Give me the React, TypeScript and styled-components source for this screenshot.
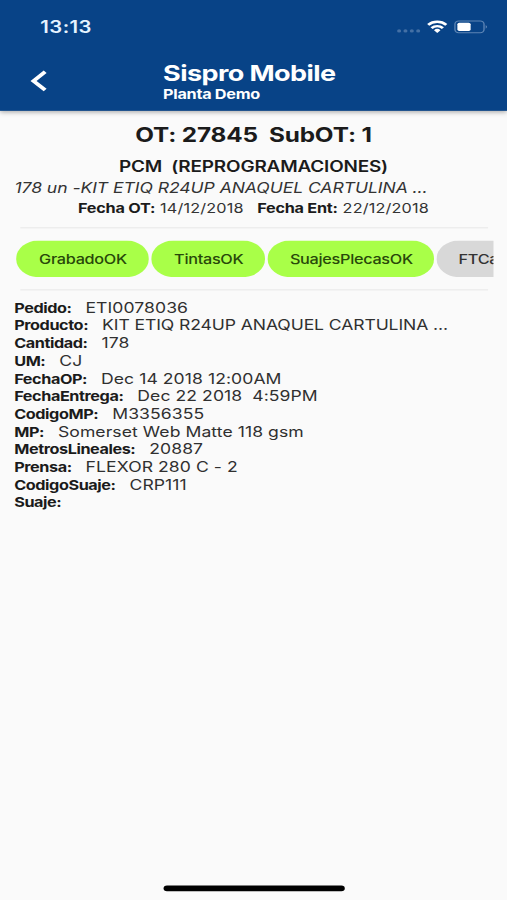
import React from "react";
import styled, { createGlobalStyle } from "styled-components";

const GlobalStyle = createGlobalStyle`
  body {
    margin: 0;
    background: #fafafa;
    font-family: Inter, "Liberation Sans", sans-serif;
    color: #1b1b1b;
    overflow: hidden;
  }
`;

const Viewport = styled.div`
  width: 507px;
  height: 900px;
  overflow: hidden;
`;

/* Laid out on a 375 x 812 phone canvas and stretched to fill the viewport. */
const Screen = styled.main`
  display: flex;
  flex-direction: column;
  width: 375px;
  height: 812px;
  background: #fafafa;
  transform: scale(1.352, 1.1084);
  transform-origin: 0 0;
`;

const Header = styled.header`
  flex: none;
  height: 100.4px;
  background: #084387;
  color: #fff;
  box-shadow: 0 1px 4px rgba(0, 0, 0, 0.35);
`;

const StatusBar = styled.div`
  display: flex;
  align-items: center;
  justify-content: space-between;
  height: 44px;
  padding: 5px 14px 0 29.8px;
  box-sizing: border-box;
`;

const Clock = styled.span`
  font-size: 15px;
  font-weight: 600;
  letter-spacing: 0.33px;
  line-height: 18px;
  color: #e6f3ff;
`;

const StatusIcons = styled.div`
  display: flex;
  align-items: center;
`;

const AppBar = styled.div`
  display: flex;
  align-items: center;
  height: 56px;
`;

const BackButton = styled.button`
  display: flex;
  width: 120.6px;
  padding: 1px 0 0 22px;
  border: 0;
  background: none;
  color: inherit;
`;

const Titles = styled.div`
  display: flex;
  flex-direction: column;
  padding-top: 2.4px;
`;

const Title = styled.h1`
  margin: 0;
  font-size: 20px;
  font-weight: 700;
  line-height: 23px;
  letter-spacing: -0.44px;
`;

const Subtitle = styled.span`
  font-size: 12px;
  font-weight: 700;
  line-height: 14px;
  letter-spacing: -0.2px;
`;

const Content = styled.section`
  display: flex;
  flex-direction: column;
  padding: 10.6px 10px 0;
`;

const OrderTitle = styled.h2`
  margin: 0;
  font-size: 18px;
  font-weight: 700;
  line-height: 22px;
  letter-spacing: -0.14px;
  text-align: center;
  white-space: pre;
`;

const Status = styled.div`
  margin-top: 7.8px;
  font-size: 14px;
  font-weight: 600;
  line-height: 17px;
  letter-spacing: -0.13px;
  text-align: center;
  white-space: pre;
`;

const Description = styled.div`
  margin-top: 3.5px;
  padding-left: 0.7px;
  font-size: 13px;
  font-style: italic;
  line-height: 17px;
  letter-spacing: -0.05px;
  color: #333;
  white-space: pre;
`;

const Dates = styled.div`
  display: flex;
  justify-content: center;
  gap: 10px;
  margin-top: 1.7px;
  font-size: 12px;
  line-height: 15px;
  letter-spacing: 0.12px;
  color: #333;
`;

const DateLabel = styled.b`
  margin-right: 3.6px;
  font-weight: 700;
  letter-spacing: -0.18px;
  color: #1b1b1b;
`;

const Divider = styled.hr`
  width: 346px;
  height: 1px;
  margin: 0 0 0 5px;
  border: 0;
  background: #e9e9e9;
`;

const DatesDivider = styled(Divider)`
  margin-top: 10px;
`;

const Chips = styled.div`
  display: flex;
  gap: 2px;
  margin: 11.5px 0;
  padding-left: 2.4px;
  overflow: hidden;
`;

const Chip = styled.span<{ $done?: boolean; $width: number }>`
  flex: none;
  display: flex;
  align-items: center;
  justify-content: center;
  width: ${(p) => p.$width}px;
  height: 32.4px;
  border-radius: 16.2px;
  background: ${(p) => (p.$done ? "#a9ff48" : "#d8d8d8")};
  color: ${(p) => (p.$done ? "#28480a" : "#333")};
  font-size: 12px;
  font-weight: 500;
  letter-spacing: -0.21px;
`;

const Fields = styled.dl`
  margin: 6.3px 0 0;
`;

const Field = styled.div`
  display: flex;
  align-items: baseline;
  height: 16px;
  line-height: 16px;

  &:last-child {
    line-height: 15px;
  }
`;

const Label = styled.dt`
  padding-left: 0.5px;
  font-size: 12px;
  font-weight: 700;
  letter-spacing: -0.31px;
`;

const Value = styled.dd`
  margin: 0 0 0 10.3px;
  font-size: 13px;
  letter-spacing: 0.05px;
  color: #303030;
  white-space: pre;
`;

const ProductValue = styled(Value)`
  letter-spacing: -0.075px;
`;

const HomeIndicator = styled.div`
  width: 134px;
  height: 5px;
  margin: auto auto 8.2px 121px;
  border-radius: 3px;
  background: #000;
`;

const product = "KIT ETIQ R24UP ANAQUEL CARTULINA ...";

const chips = [
  { text: "GrabadoOK", width: 98, done: true },
  { text: "TintasOK", width: 84, done: true },
  { text: "SuajesPlecasOK", width: 123, done: true },
  { text: "FTCalidad", width: 87.5, done: false },
];

const fields = [
  ["Pedido", "ETI0078036"],
  ["Producto", product],
  ["Cantidad", "178"],
  ["UM", "CJ"],
  ["FechaOP", "Dec 14 2018 12:00AM"],
  ["FechaEntrega", "Dec 22 2018  4:59PM"],
  ["CodigoMP", "M3356355"],
  ["MP", "Somerset Web Matte 118 gsm"],
  ["MetrosLineales", "20887"],
  ["Prensa", "FLEXOR 280 C - 2"],
  ["CodigoSuaje", "CRP111"],
  ["Suaje", ""],
];

const StatusGlyphs = () => (
  <svg width="68" height="14" viewBox="0 0 68 14">
    <g fill="#4470a5">
      <circle cx="2.2" cy="9.9" r="1.5" />
      <circle cx="6.9" cy="9.9" r="1.5" />
      <circle cx="11.6" cy="9.9" r="1.5" />
      <circle cx="16.3" cy="9.9" r="1.5" />
    </g>
    <g fill="none" stroke="#fff" strokeWidth="2.2">
      <path d="M23.7 4.4a9.6 9.6 0 0 1 13.4 0" />
      <path d="M26.2 7.3a6 6 0 0 1 8.4 0" />
    </g>
    <path d="M28 9.2a3.4 3.4 0 0 1 4.8 0L30.4 11.7z" fill="#fff" />
    <rect x="43.5" y="0.9" width="21.5" height="10.6" rx="2.8" fill="none" stroke="#5d85b5" />
    <rect x="45.3" y="2.5" width="9.8" height="7.4" rx="1.4" fill="#fff" />
    <path d="M66.3 4.5q1.5 1.6 0 3.4z" fill="#7898c1" />
  </svg>
);

export default function App() {
  return (
    <>
      <GlobalStyle />
      <Viewport>
        <Screen>
          <Header>
            <StatusBar>
              <Clock>13:13</Clock>
              <StatusIcons>
                <StatusGlyphs />
              </StatusIcons>
            </StatusBar>
            <AppBar>
              <BackButton aria-label="Atrás">
                <svg width="14" height="20" viewBox="0 0 14 20">
                  <path d="M11.4 1.8 2.8 10l8.6 8.2" fill="none" stroke="#fff" strokeWidth="3.1" />
                </svg>
              </BackButton>
              <Titles>
                <Title>Sispro Mobile</Title>
                <Subtitle>Planta Demo</Subtitle>
              </Titles>
            </AppBar>
          </Header>
          <Content>
            <OrderTitle>{"OT: 27845  SubOT: 1"}</OrderTitle>
            <Status>{"PCM  (REPROGRAMACIONES)"}</Status>
            <Description>{`178 un -${product}`}</Description>
            <Dates>
              <span>
                <DateLabel>Fecha OT:</DateLabel>14/12/2018
              </span>
              <span>
                <DateLabel>Fecha Ent:</DateLabel>22/12/2018
              </span>
            </Dates>
            <DatesDivider />
            <Chips>
              {chips.map((c) => (
                <Chip key={c.text} $done={c.done} $width={c.width}>
                  {c.text}
                </Chip>
              ))}
            </Chips>
            <Divider />
            <Fields>
              {fields.map(([label, value]) => (
                <Field key={label}>
                  <Label>{label}:</Label>
                  {label === "Producto" ? <ProductValue>{value}</ProductValue> : <Value>{value}</Value>}
                </Field>
              ))}
            </Fields>
          </Content>
          <HomeIndicator />
        </Screen>
      </Viewport>
    </>
  );
}
